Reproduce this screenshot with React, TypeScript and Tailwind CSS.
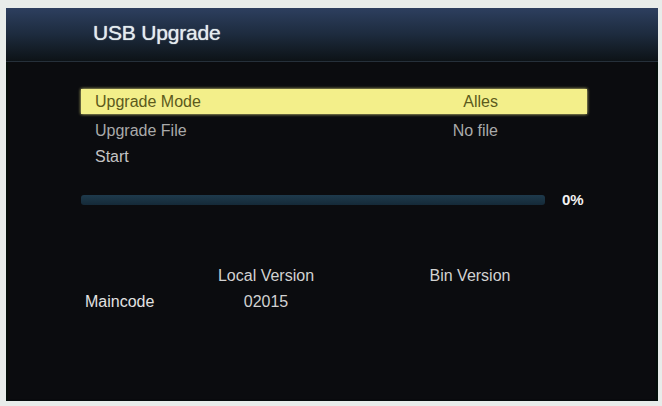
export default function App() {
  const font = { fontFamily: '"Liberation Sans", Arial, sans-serif' };
  return (
    <div className="w-[662px] h-[406px] bg-[#e8ecea] pt-[8px] pl-[6px] overflow-hidden" style={font}>
      <div className="w-[652px] h-[393px] bg-[#0b0c0f] flex flex-col shadow-[inset_2px_0_2px_#05100c,inset_-2px_0_2px_#05100c]">
        <div className="h-[54px] bg-gradient-to-b from-[#2d3f5f] via-[#1d2b3e] to-[#0d1317] border-b border-[#26303a] pl-[87px] pt-[13px]">
          <div className="text-[21px] leading-[24px] text-[#e4ebee] tracking-[-0.2px] [text-shadow:0_0_1px_#e4ebee]">USB Upgrade</div>
        </div>
        <div className="flex flex-col pl-[75px] pr-[71px] pt-[27px]">
          <div className="h-[25px] bg-[#f3ef8a] shadow-[0_0_3px_#f3ef8a] flex items-center pl-[14px] text-[16px] text-[#5c5a1c]">
            <span className="flex-1">Upgrade Mode</span>
            <span className="w-[125px] text-right pr-[89px] box-content">Alles</span>
          </div>
          <div className="mt-[4px] h-[26px] flex items-center pl-[14px] text-[16px] text-[#a9aaaa]">
            <span className="flex-1">Upgrade File</span>
            <span className="w-[125px] text-right pr-[89px] box-content">No file</span>
          </div>
          <div className="h-[26px] flex items-center pl-[14px] text-[16px] text-[#c4c4c4]">
            <span>Start</span>
          </div>
          <div className="mt-[19px] flex items-center">
            <div className="w-[464px] h-[10px] rounded-[3px] bg-gradient-to-b from-[#1e3a4c] to-[#152a38]" />
            <span className="ml-[17px] text-[15px] font-bold text-[#f2f2f2]">0%</span>
          </div>
        </div>
        <div className="mt-[51px] pl-[79px] text-[16px] text-[#d2d2d2]">
          <div className="flex h-[26px] items-center">
            <div className="w-[115px]" />
            <div className="w-[132px] text-center">Local Version</div>
            <div className="w-[72px]" />
            <div className="w-[132px] text-center">Bin Version</div>
          </div>
          <div className="flex h-[27px] items-center">
            <div className="w-[115px] text-[#e2e2e2]">Maincode</div>
            <div className="w-[132px] text-center">02015</div>
          </div>
        </div>
      </div>
    </div>
  );
}
